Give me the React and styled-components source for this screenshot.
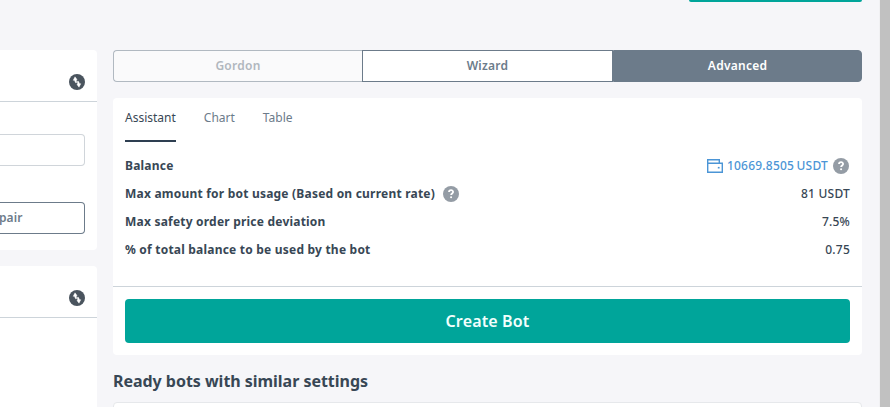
import React from "react";
import styled, { createGlobalStyle } from "styled-components";

const GlobalStyle = createGlobalStyle`
  *, *::before, *::after { box-sizing: border-box; }
  body {
    margin: 0;
    background: #f6f6f9;
    font-family: "Noto Sans", "Open Sans", sans-serif;
    color: #384755;
  }
  button { font-family: inherit; margin: 0; padding: 0; }
`;

const Page = styled.div`
  display: flex;
  width: 890px;
  height: 407px;
  overflow: hidden;
`;

const SideColumn = styled.aside`
  width: 97px;
  flex: none;
  padding-top: 50px;
  display: flex;
  flex-direction: column;
  gap: 16px;
`;

const SideCard = styled.section`
  height: ${(p) => p.$height}px;
  flex: none;
  background: #fff;
  border-radius: 0 4px 4px 0;
`;

const SideHeader = styled.header`
  height: 52px;
  padding: 12px 12px 0 0;
  display: flex;
  align-items: center;
  justify-content: flex-end;
  border-bottom: 1px solid #cdd4da;
`;

const SideBody = styled.div`
  padding: 32px 12px 0 0;
  display: flex;
  flex-direction: column;
  gap: 36px;
`;

const Field = styled.div`
  height: 32px;
  border: 1px solid #d0d5da;
  border-left: 0;
  border-radius: 0 4px 4px 0;
  background: #fff;
`;

const PairButton = styled.button`
  height: 32px;
  padding-bottom: 2px;
  border: 1px solid #6c7b8a;
  border-left: 0;
  border-radius: 0 4px 4px 0;
  background: #fff;
  color: #6c7b8a;
  font-size: 12px;
  font-weight: 600;
  letter-spacing: 0.1px;
  text-align: left;
  text-indent: -1px;
`;

const Main = styled.main`
  width: 749px;
  flex: none;
  margin-left: 16px;
  display: flex;
  flex-direction: column;
`;

const TopAction = styled.div`
  align-self: flex-end;
  width: 173px;
  height: 2px;
  flex: none;
  background: #00a59a;
  border-radius: 0 0 4px 4px;
`;

const ModeSwitch = styled.div`
  margin-top: 48px;
  height: 32px;
  flex: none;
  display: grid;
  grid-template-columns: 249px 251px 249px;
`;

const modes = {
  disabled: "background:#fafafb;color:#b1b7be;border-color:#b1b9c1;border-right:0;border-radius:4px 0 0 4px;",
  plain: "background:#fff;color:#6c7b8a;border-color:#6c7b8a;",
  active: "background:#6c7b8a;color:#fff;border-color:#6c7b8a;border-radius:0 4px 4px 0;",
};

const ModeButton = styled.button`
  padding-bottom: 2px;
  border: 1px solid;
  font-size: 12px;
  font-weight: 600;
  letter-spacing: 0.25px;
  ${(p) => modes[p.$kind]}
`;

const Panel = styled.section`
  margin-top: 16px;
  height: 257px;
  flex: none;
  background: #fff;
  border-radius: 4px;
  display: flex;
  flex-direction: column;
`;

const Tabs = styled.nav`
  height: 44px;
  padding: 0 12px;
  display: flex;
  gap: 28px;
`;

const Tab = styled.button`
  height: 44px;
  padding-bottom: 4px;
  border: 0;
  border-bottom: 2px solid ${(p) => (p.$active ? "#2e3f51" : "transparent")};
  background: none;
  color: ${(p) => (p.$active ? "#384755" : "#6c7b8a")};
  font-size: 12px;
`;

const Stats = styled.dl`
  margin: 0;
  padding: 10px 12px 0;
  height: 145px;
`;

const StatRow = styled.div`
  height: 28px;
  display: flex;
  align-items: center;
  justify-content: space-between;
`;

const StatLabel = styled.dt`
  display: flex;
  align-items: center;
  gap: 8px;
  font-size: 12px;
  font-weight: 700;
  letter-spacing: 0.21px;
`;

const StatText = styled.span`
  padding-bottom: 2px;
`;

const StatValue = styled.dd`
  margin: 0;
  padding-bottom: ${(p) => (p.$wallet ? 0 : 2)}px;
  font-size: 12px;
  font-weight: 500;
  letter-spacing: 0.22px;
`;

const Wallet = styled.span`
  display: flex;
  align-items: center;
  padding-right: 1px;
  color: #4b95d6;
`;

const WalletAmount = styled.span`
  margin: 0 5px 0 4px;
  padding-bottom: 2px;
  word-spacing: -1px;
`;

const PanelFooter = styled.footer`
  height: 69px;
  margin-top: -1px;
  padding: 12px 12px 0;
  border-top: 1px solid #cdd4da;
`;

const CreateButton = styled.button`
  display: block;
  width: 100%;
  height: 44px;
  border: 0;
  border-radius: 4px;
  background: #00a59a;
  color: #f2fffd;
  font-size: 16px;
  font-weight: 600;
  letter-spacing: 0.15px;
`;

const Heading = styled.h2`
  margin: 14px 0 0;
  height: 24px;
  flex: none;
  line-height: 24px;
  font-size: 16px;
  font-weight: 700;
  letter-spacing: -0.03px;
  white-space: nowrap;
`;

const BotCard = styled.section`
  margin-top: 9px;
  height: 60px;
  flex: none;
  border: 1px solid #e6e8eb;
  border-radius: 4px;
  background: #fff;
`;

const Scrollbar = styled.div`
  width: 11px;
  margin-left: auto;
  background: #c1c1c1;
  border-left: 1px solid #f1f1f3;
`;

const Icon = styled.svg`
  display: block;
  flex: none;
`;

const SwapIcon = () => (
  <Icon width="16" height="16" viewBox="0 0 16 16">
    <circle cx="8" cy="8" r="8" fill="#4a545e" />
    <path d="M6 2.8 8.1 5.6 7.3 6 7.7 8.6 6.8 9 5.3 6.3H4.2ZM10 13.2 7.9 10.4 8.7 10 8.3 7.4 9.2 7 10.7 9.7H11.8Z" fill="#fff" stroke="#fff" strokeWidth=".4" />
  </Icon>
);

const HelpIcon = () => (
  <Icon width="16" height="16" viewBox="0 0 16 16">
    <circle cx="8" cy="8" r="8" fill="#949ca5" />
    <path d="M6 6c.1-2.4 4.1-2.4 4.1 0 0 1.3-2 1.6-2 3" fill="none" stroke="#fff" strokeWidth="1.8" />
    <circle cx="8.1" cy="11.2" r="1.05" fill="#fff" />
  </Icon>
);

const WalletIcon = () => (
  <Icon width="16" height="14" viewBox="0 0 16 14" fill="none" stroke="#4b95d6" strokeWidth="1.4">
    <path d="M.7 4.2H15.3V13.3H.7ZM.7 4.2V.7H12.3V4.2" />
    <path d="M10.8 8.7h1.8" strokeWidth="1.6" />
  </Icon>
);

const stats = [
  { label: "Max amount for bot usage (Based on current rate)", value: "81 USDT", help: true },
  { label: "Max safety order price deviation", value: "7.5%" },
  { label: "% of total balance to be used by the bot", value: "0.75" },
];

export default function App() {
  return (
    <>
      <GlobalStyle />
      <Page>
        <SideColumn>
          <SideCard $height={200}>
            <SideHeader><SwapIcon /></SideHeader>
            <SideBody>
              <Field />
              <PairButton>pair</PairButton>
            </SideBody>
          </SideCard>
          <SideCard $height={160}>
            <SideHeader><SwapIcon /></SideHeader>
          </SideCard>
        </SideColumn>
        <Main>
          <TopAction />
          <ModeSwitch>
            <ModeButton $kind="disabled" disabled>Gordon</ModeButton>
            <ModeButton $kind="plain">Wizard</ModeButton>
            <ModeButton $kind="active">Advanced</ModeButton>
          </ModeSwitch>
          <Panel>
            <Tabs>
              <Tab $active>Assistant</Tab>
              <Tab>Chart</Tab>
              <Tab>Table</Tab>
            </Tabs>
            <Stats>
              <StatRow>
                <StatLabel><StatText>Balance</StatText></StatLabel>
                <StatValue $wallet>
                  <Wallet>
                    <WalletIcon />
                    <WalletAmount>10669.8505 USDT</WalletAmount>
                    <HelpIcon />
                  </Wallet>
                </StatValue>
              </StatRow>
              {stats.map((s) => (
                <StatRow key={s.label}>
                  <StatLabel><StatText>{s.label}</StatText>{s.help && <HelpIcon />}</StatLabel>
                  <StatValue>{s.value}</StatValue>
                </StatRow>
              ))}
            </Stats>
            <PanelFooter>
              <CreateButton>Create Bot</CreateButton>
            </PanelFooter>
          </Panel>
          <Heading>Ready bots with similar settings</Heading>
          <BotCard />
        </Main>
        <Scrollbar />
      </Page>
    </>
  );
}
